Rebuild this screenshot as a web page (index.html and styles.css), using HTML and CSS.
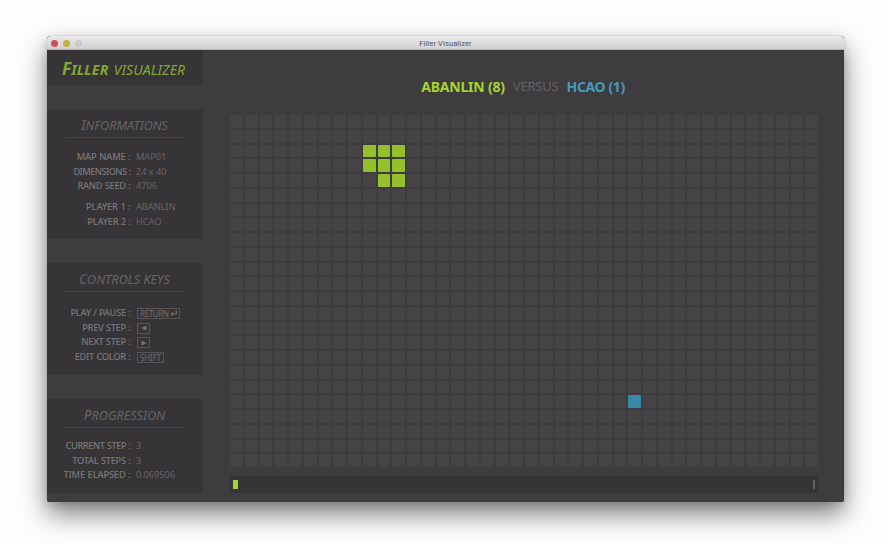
FILE: index.html
```html
<!DOCTYPE html>
<html lang="en">
<head>
<meta charset="utf-8">
<title>Filler Visualizer</title>
<link rel="stylesheet" href="styles.css">
</head>
<body>
<div class="window">
  <header class="titlebar">
    <div class="lights"><i class="close"></i><i class="minimize"></i><i class="expand"></i></div>
    <span class="window-title">Filler Visualizer</span>
  </header>
  <div class="content">
    <aside class="sidebar">
      <h1 class="brand"><b><big>F</big>ILLER</b><span>VISUALIZER</span></h1>
      <section class="panel info">
        <h2><span><big>I</big>NFORMATIONS</span></h2>
        <dl>
          <dt>MAP NAME :</dt><dd>MAP01</dd>
          <dt class="dimensions">DIMENSIONS :</dt><dd>24 x 40</dd>
          <dt>RAND SEED :</dt><dd>4706</dd>
        </dl>
        <dl class="players">
          <dt>PLAYER 1 :</dt><dd>ABANLIN</dd>
          <dt>PLAYER 2 :</dt><dd>HCAO</dd>
        </dl>
      </section>
      <section class="panel controls">
        <h2><span><big>C</big>ONTROLS KEYS</span></h2>
        <dl>
          <dt>PLAY / PAUSE :</dt>
          <dd><kbd class="return">RETURN<svg width="7" height="7" viewBox="0 0 7 7"><path d="M6.3.5V4H1M3 2 1 4l2 2"/></svg></kbd></dd>
          <dt>PREV STEP :</dt>
          <dd><kbd class="arrow"><svg width="6" height="6" viewBox="0 0 6 6"><path class="solid" d="M5.5.5v5L.5 3z"/></svg></kbd></dd>
          <dt>NEXT STEP :</dt>
          <dd><kbd class="arrow"><svg width="6" height="6" viewBox="0 0 6 6"><path class="solid" d="M.5.5v5l5-2.500z"/></svg></kbd></dd>
          <dt>EDIT COLOR :</dt><dd><kbd class="shift">SHIFT</kbd></dd>
        </dl>
      </section>
      <section class="panel progress">
        <h2><span><big>P</big>ROGRESSION</span></h2>
        <dl>
          <dt>CURRENT STEP :</dt><dd>3</dd>
          <dt>TOTAL STEPS :</dt><dd>3</dd>
          <dt class="elapsed">TIME ELAPSED :</dt><dd>0.069506</dd>
        </dl>
      </section>
    </aside>
    <main>
      <div class="score"><b class="p1">ABANLIN (8)</b><span>VERSUS</span><b class="p2">HCAO (1)</b></div>
      <div class="board" id="board"></div>
      <div class="bar"><i class="lead"></i><i class="trail"></i></div>
    </main>
  </div>
</div>
<script src="board.js"></script>
</body>
</html>
```
FILE: styles.css
```css
* { box-sizing: border-box; }
body {
  margin: 0;
  width: 888px;
  height: 544px;
  overflow: hidden;
  background: #fefdfe;
  font-family: "Noto Sans", "Open Sans", sans-serif;
  padding: 36px 0 0 47px;
}
.window {
  width: 797px;
  height: 466px;
  border-radius: 4px 4px 2px 2px;
  background: #3e3c3e;
  box-shadow: 0 0 1px #888, 0 12px 26px rgba(0, 0, 0, .5), 0 3px 10px rgba(0, 0, 0, .12);
}
.titlebar {
  display: grid;
  grid-template-columns: 1fr auto 1fr;
  align-items: center;
  height: 14px;
  border-radius: 4px 4px 0 0;
  border-bottom: 1px solid #b5b3b5;
  background: linear-gradient(#ebe9eb, #d2d0d2);
}
.lights { display: flex; gap: 5px; padding-left: 4px; }
.lights i { width: 7px; height: 7px; border-radius: 50%; }
.close { background: #d04d59; }
.minimize { background: #c2b13f; }
.expand { background: #d0ced0; border: 1px solid #bfbdbf; }
.window-title { font: 7.500px/12px "Roboto", sans-serif; letter-spacing: .12px; color: #555355; padding-top: 2px; }
.content { display: flex; height: 452px; }
.sidebar { width: 156px; }
.brand {
  display: flex;
  gap: 5px;
  justify-content: center;
  align-items: baseline;
  height: 35px;
  margin: 0 0 24px;
  padding-right: 3px;
  background: #363436;
  color: #83a733;
  font-size: 14px;
  line-height: 40px;
  font-style: italic;
  font-weight: 400;
  white-space: nowrap;
}
.brand b { letter-spacing: .25px; }
.brand big { font-size: 17px; line-height: 1; }
.brand span { letter-spacing: .1px; }
.panel { background: #363436; border-radius: 0 2px 2px 0; padding: 5px 19px 0 18px; }
.info { height: 130px; margin-bottom: 24px; }
.controls { height: 112px; margin-bottom: 24px; }
.progress { height: 94px; }
h2 {
  height: 24px;
  margin: 0;
  border-bottom: 1px solid #454345;
  color: #676567;
  font-size: 12.500px;
  line-height: 23px;
  font-style: italic;
  font-weight: 400;
  text-align: center;
  white-space: nowrap;
}
.controls h2, .progress h2 { letter-spacing: .08px; }
h2 big { font-size: 13.500px; line-height: 1; }
dl {
  display: grid;
  grid-template-columns: 83.500px 1fr;
  column-gap: 5.500px;
  grid-auto-rows: 14.7px;
  margin: 12px -17px 0 -18px;
  line-height: 14.700px;
  font-size: 9.300px;
}
.players { margin-top: 6px; }
dt { text-align: right; color: #7a787a; font-weight: 500; white-space: nowrap; letter-spacing: -.28px; word-spacing: .3px; }
dt.dimensions { letter-spacing: -.6px; }
dt.elapsed { letter-spacing: -.15px; }
.controls dt { letter-spacing: -.3px; }
.progress dt:first-child { letter-spacing: -.45px; }
.info dt:first-child { letter-spacing: -.15px; }
.progress dl { margin-top: 11px; }
dd { margin: 0; color: #666466; white-space: nowrap; letter-spacing: -.1px; }
.controls dl { margin-top: 14px; }
kbd {
  display: inline-flex;
  align-items: center;
  height: 11px;
  margin: 2px 0 0 1px;
  padding: 0 2px;
  border: 1px solid #575557;
  color: #706e70;
  font: 8px/9px "Noto Sans", sans-serif;
  letter-spacing: -.35px;
  vertical-align: top;
}
.arrow { width: 13px; padding-left: 3px; }
.shift { letter-spacing: -.1px; }
.return svg { margin-left: 1px; }
svg path { fill: none; stroke: #777577; stroke-width: 1; }
svg .solid { fill: #777577; stroke: none; }
main { flex: 1; padding-left: 27px; }
.score {
  display: flex;
  justify-content: center;
  gap: 8px;
  width: 586px;
  height: 65px;
  padding-top: 25px;
  font-size: 14px;
  line-height: 23px;
}
.score span { color: #626062; font-size: 13px; letter-spacing: -.2px; }
.p1 { color: #a5d52e; letter-spacing: -.2px; }
.p2 { color: #459bbb; letter-spacing: -.38px; }
.board {
  display: grid;
  grid-template-columns: repeat(40, 1fr);
  grid-template-rows: repeat(24, 1fr);
  gap: 2px;
  width: 588px;
  height: 352px;
}
.board i { background: #454345; border-radius: 1px; }
.board .green { background: #94c02b; }
.board .blue { background: #378aa7; }
.bar {
  display: flex;
  justify-content: space-between;
  align-items: center;
  width: 588px;
  height: 17px;
  margin-top: 9px;
  padding: 0 3px 0 3px;
  background: #363436;
}
.bar i { height: 9px; }
.lead { width: 5px; background: #a5d52e; }
.trail { width: 2px; background: linear-gradient(90deg, #3b7486 50%, #636163 50%); }
```
FILE: board.js
```js
const rows = 24;
const columns = 40;
const owners = { green: ['2,9', '2,10', '2,11', '3,9', '3,10', '3,11', '4,10', '4,11'], blue: ['19,27'] };
const board = document.getElementById('board');
for (let r = 0; r < rows; r++) {
  for (let c = 0; c < columns; c++) {
    const cell = document.createElement('i');
    const key = `${r},${c}`;
    if (owners.green.includes(key)) cell.className = 'green';
    if (owners.blue.includes(key)) cell.className = 'blue';
    board.appendChild(cell);
  }
}
```
